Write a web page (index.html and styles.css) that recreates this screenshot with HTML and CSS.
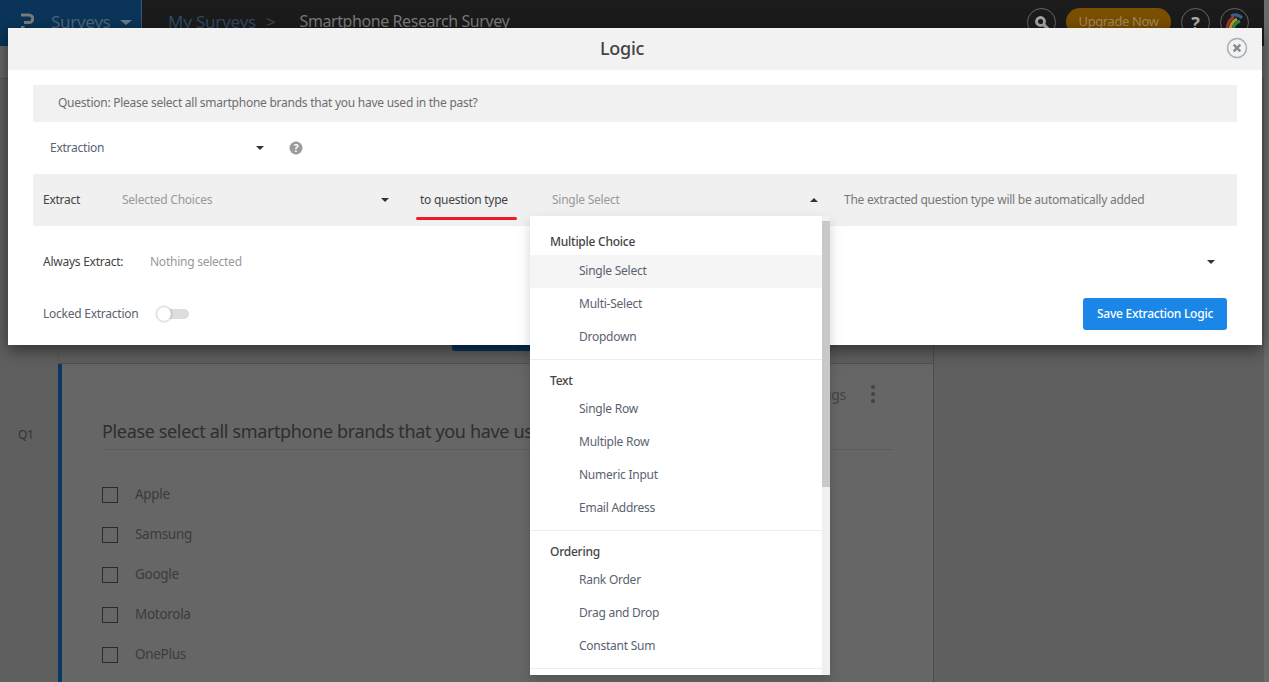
FILE: index.html
```html
<!DOCTYPE html>
<html lang="en">
<head>
<meta charset="utf-8">
<title>Logic</title>
<link rel="stylesheet" href="styles.css">
</head>
<body>
<header class="nav">
  <div class="brand">
    <svg class="logo" viewBox="0 0 13 17" width="13" height="17"><path d="M0 2h8a3.8 3.8 0 0 1 0 7.6H3M0 14.5h3.5" fill="none" stroke="#7b7b7b" stroke-width="3"/></svg>
    <span class="brand-name">Surveys</span>
    <span class="caret brand-caret"></span>
  </div>
  <nav class="crumbs">
    <span class="crumb-link">My Surveys</span>
    <span class="crumb-sep">&gt;</span>
    <span class="crumb-title">Smartphone Research Survey</span>
  </nav>
  <div class="nav-tools">
    <span class="circle"><svg viewBox="0 0 16 16" width="16" height="16"><circle cx="6.5" cy="6.5" r="4" fill="none" stroke="#a5a5a5" stroke-width="2.8"/><path d="M9.5 9.5l4.5 4.5" stroke="#a5a5a5" stroke-width="3.2"/></svg></span>
    <span class="upgrade">Upgrade Now</span>
    <span class="circle help">?</span>
    <span class="circle"><svg viewBox="0 0 20 20" width="20" height="20"><path d="M2 17C2 11 5 6 9 4" fill="none" stroke="#a33" stroke-width="3"/><path d="M5 18C5 12 8 8 12 6" fill="none" stroke="#b9a020" stroke-width="3"/><path d="M8 18C8 14 10 10 15 8" fill="none" stroke="#2f8a4a" stroke-width="3"/><path d="M6 3C10 1 14 2 17 5" fill="none" stroke="#35608f" stroke-width="3"/></svg></span>
  </div>
</header>
<div class="subnav"></div>
<main class="page">
  <div class="rail"><span class="qnum">Q1</span></div>
  <div class="column">
    <div class="toolbar"><span class="add-btn"></span></div>
    <section class="card">
      <div class="card-tools"><span class="settings">Settings</span><span class="dots"><i></i><i></i><i></i></span></div>
      <h2 class="question">Please select all smartphone brands that you have used in the past?</h2>
      <ul class="options">
        <li><span class="box"></span>Apple</li>
        <li><span class="box"></span>Samsung</li>
        <li><span class="box"></span>Google</li>
        <li><span class="box"></span>Motorola</li>
        <li><span class="box"></span>OnePlus</li>
      </ul>
    </section>
  </div>
</main>
<div class="scroll-strip"></div>

<div class="modal">
  <div class="modal-head">
    <span class="modal-title">Logic</span>
    <svg class="close" viewBox="0 0 22 22" width="22" height="22"><circle cx="11" cy="11" r="9.5" fill="none" stroke="#a3aeb8" stroke-width="1.5"/><path d="M7.7 7.7l6.6 6.6M14.3 7.7l-6.6 6.6" stroke="#8a8a8a" stroke-width="2.4"/></svg>
  </div>
  <div class="modal-body">
    <div class="q-bar">Question: Please select all smartphone brands that you have used in the past?</div>
    <div class="logic-row">
      <span class="logic-select">Extraction<span class="caret"></span></span>
      <svg class="hint" viewBox="0 0 14 14" width="14" height="14"><circle cx="7" cy="7" r="6.5" fill="#9b9b9b"/><text x="7" y="10.5" class="hint-mark">?</text></svg>
    </div>
    <div class="extract-bar">
      <span class="ex-label">Extract</span>
      <span class="ex-select ex-select-a">Selected Choices<span class="caret"></span></span>
      <span class="ex-to">to question type</span>
      <span class="ex-select ex-select-b">Single Select<span class="caret caret-up"></span></span>
      <span class="ex-note">The extracted question type will be automatically added</span>
    </div>
    <div class="always-row">
      <span class="always-label">Always Extract:</span>
      <span class="always-value">Nothing selected</span>
      <span class="caret"></span>
    </div>
    <div class="locked-row">
      <span class="locked-label">Locked Extraction</span>
      <span class="toggle"><span class="knob"></span></span>
      <button class="save">Save Extraction Logic</button>
    </div>
  </div>
</div>

<div class="menu">
  <div class="menu-list">
    <div class="group">
      <div class="group-title">Multiple Choice</div>
      <div class="item active">Single Select</div>
      <div class="item">Multi-Select</div>
      <div class="item">Dropdown</div>
    </div>
    <div class="group">
      <div class="group-title">Text</div>
      <div class="item">Single Row</div>
      <div class="item">Multiple Row</div>
      <div class="item">Numeric Input</div>
      <div class="item">Email Address</div>
    </div>
    <div class="group">
      <div class="group-title">Ordering</div>
      <div class="item">Rank Order</div>
      <div class="item">Drag and Drop</div>
      <div class="item">Constant Sum</div>
    </div>
  </div>
  <div class="menu-scroll"><div class="menu-thumb"></div></div>
</div>
</body>
</html>
```
FILE: styles.css
```css
* { box-sizing: border-box; }
html, body { margin: 0; height: 682px; overflow: hidden; }
body { background: #5f5f5f; font-family: "Noto Sans", "Open Sans", sans-serif; font-size: 12px; letter-spacing: -0.25px; color: #555; position: relative; }

.caret { display: inline-block; width: 0; height: 0; border-left: 4px solid transparent; border-right: 4px solid transparent; border-top: 4px solid #333; }
.caret-up { border-top: 0; border-bottom: 4px solid #333; }

.nav { height: 46px; background: #1b1b1b; display: flex; align-items: flex-start; }
.brand { width: 142px; height: 46px; background: #0a3459; border-right: 1px solid #3d5872; display: flex; align-items: center; padding: 0 0 4px 21px; }
.logo { margin-right: 17px; }
.brand-name { color: #4f6578; font-size: 17px; letter-spacing: -0.3px; }
.brand-caret { margin: 3px 0 0 10px; border-top-color: #6a7a88; border-left-width: 6px; border-right-width: 6px; border-top-width: 5px; }
.crumbs { display: flex; align-items: center; height: 42px; padding-left: 26px; font-size: 17px; letter-spacing: -0.2px; }
.crumb-link { color: #2f4a63; }
.crumb-sep { color: #444; margin: 0 24px 0 10px; }
.crumb-title { color: #7a7a7a; font-size: 16px; letter-spacing: -0.42px; }
.nav-tools { margin-left: auto; display: flex; align-items: flex-start; gap: 10px; height: 44px; padding: 8px 20px 0 0; }
.circle { width: 29px; height: 29px; border: 1px solid #666; border-radius: 50%; display: flex; align-items: center; justify-content: center; }
.upgrade { width: 105px; height: 28px; padding-bottom: 2px; border-radius: 14px; background: #7a4f00; color: #a08a5c; font-size: 13px; letter-spacing: -0.4px; display: flex; align-items: center; justify-content: center; }
.help { color: #aaa; font-weight: 700; font-size: 18px; }

.subnav { height: 33px; border-bottom: 1px solid #555; background: #666; }

.page { display: flex; }
.rail { width: 58px; padding: 347px 0 0 18px; }
.qnum { font-size: 12px; color: #333; }
.column { width: 876px; border-right: 1px solid #4d4d4d; }
.toolbar { height: 285px; display: flex; justify-content: center; background: #5f5f5f; border-left: 1px solid #595959; border-bottom: 1px solid #505050; }
.add-btn { width: 110px; height: 272px; background: #0a3459; border-radius: 0 0 3px 3px; margin-left: 22px; }
.card { background: #666; border-left: 4px solid #0a3a63; padding: 20px 40px 0 40px; height: 320px; }
.card-tools { display: flex; justify-content: flex-end; align-items: center; height: 20px; padding-right: 18px; gap: 25px; color: #444; font-size: 14px; }
.dots { display: flex; flex-direction: column; gap: 3px; }
.dots i { width: 4px; height: 4px; background: #444; border-radius: 50%; }
.question { margin: 15px 0 0; font-weight: 400; font-size: 18px; letter-spacing: -0.35px; line-height: 24px; color: #2e2e2e; padding-bottom: 6px; border-bottom: 1px solid #5c5c5c; white-space: nowrap; overflow: hidden; }
.options { list-style: none; margin: 25px 0 0; padding: 0; }
.options li { display: flex; align-items: center; height: 40px; padding-bottom: 2px; color: #3c3c3c; font-size: 13.5px; letter-spacing: -0.3px; }
.box { width: 16px; height: 16px; border: 1px solid #2c2c2c; margin: 2px 17px 0 0; }

.scroll-strip { position: absolute; right: 0; top: 0; width: 5px; height: 682px; background: #6b6b6b; }

.modal { position: absolute; left: 8px; top: 28px; width: 1254px; height: 317px; background: #fff; box-shadow: 0 5px 15px rgba(0,0,0,.5); }
.modal-head { height: 42px; background: #f2f2f2; display: flex; align-items: center; justify-content: center; position: relative; padding: 0 26px 2px 0; }
.modal-title { font-size: 18px; letter-spacing: -0.3px; color: #444; font-weight: 500; }
.close { position: absolute; right: 14px; top: 9px; }
.modal-body { padding: 15px 25px 0; }
.q-bar { height: 37px; background: #f1f1f1; line-height: 35px; padding-left: 25px; color: #6e6e6e; }
.logic-row { height: 52px; display: flex; align-items: center; padding-left: 17px; }
.logic-select { width: 214px; display: flex; justify-content: space-between; align-items: center; color: #5a6270; padding-bottom: 2px; }
.logic-select .caret { margin-top: 2px; }
.hint { margin-left: 25px; }
.hint-mark { font-size: 10px; font-weight: 700; fill: #fff; text-anchor: middle; }
.extract-bar { height: 52px; background: #f0f0f0; display: flex; align-items: center; padding-left: 10px; color: #555; }
.ex-label { width: 79px; color: #444; margin-bottom: 2px; }
.ex-select { display: flex; justify-content: space-between; align-items: center; color: #999; padding-bottom: 2px; }
.ex-select .caret { margin-top: 2px; }
.ex-select-a { width: 267px; }
.ex-to { margin: 0 0 2px 27px; width: 101px; color: #444; position: relative; padding-left: 4px; }
.ex-to::after { content: ""; position: absolute; left: 0; right: 0; top: 26px; height: 3px; background: #ed1c24; border-radius: 2px; }
.ex-select-b { margin-left: 35px; width: 266px; }
.ex-note { margin: 0 0 2px 26px; color: #777; }
.always-row { height: 72px; display: flex; align-items: center; padding: 0 22px 0 10px; }
.always-label { width: 107px; color: #444; margin-bottom: 2px; }
.always-value { color: #999; margin-bottom: 2px; }
.always-row .caret { margin-left: auto; }
.locked-row { display: flex; align-items: center; height: 32px; padding: 0 10px; }
.locked-label { width: 114px; color: #5a6270; margin-bottom: 2px; }
.toggle { width: 32px; height: 10px; background: #ddd; border-radius: 5px; position: relative; }
.knob { position: absolute; left: 0; top: -2px; width: 14px; height: 14px; border-radius: 50%; background: #fff; box-shadow: 0 0 3px rgba(0,0,0,.4); }
.save { margin-left: auto; width: 144px; height: 32px; padding: 0 0 2px; background: #1a87e8; color: #fff; border: 0; border-radius: 3px; font: 500 12px "Noto Sans", sans-serif; letter-spacing: -0.25px; }

.menu { position: absolute; left: 530px; top: 216px; width: 300px; height: 459px; background: #fff; box-shadow: 0 6px 12px rgba(0,0,0,.175); display: flex; overflow: hidden; }
.menu-list { flex: 1; padding-top: 7px; }
.group { border-bottom: 1px solid #ececec; padding-bottom: 5px; }
.group-title { height: 33px; line-height: 42px; padding-left: 20px; font-weight: 500; color: #444; }
.group:first-child .group-title { height: 32px; line-height: 38px; }
.item { height: 33px; line-height: 31px; padding-left: 49px; color: #5a6270; }
.active { background: #f5f5f5; }
.menu-scroll { width: 8px; background: #f0f0f0; padding-top: 5px; }
.menu-thumb { height: 266px; background: #c8c8c8; }
```
